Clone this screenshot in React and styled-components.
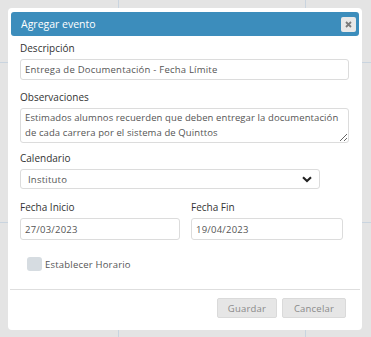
import React from "react";
import styled, { createGlobalStyle } from "styled-components";

const Global = createGlobalStyle`
  html, body { margin: 0; padding: 0; }
  body {
    width: 371px;
    height: 337px;
    overflow: hidden;
    font-family: "Open Sans", "Liberation Sans", sans-serif;
    background-color: #e4e4e4;
    background-image:
      linear-gradient(#c9d4df, #c9d4df),
      linear-gradient(#c9d4df, #c9d4df),
      linear-gradient(#c9d4df, #c9d4df),
      linear-gradient(#c9d4df, #c9d4df);
    background-repeat: no-repeat;
    background-size: 1px 337px, 1px 337px, 371px 1px, 371px 1px;
    background-position: 118px 0, 305px 0, 0 62px, 0 222px;
  }
`;

const Page = styled.div`
  padding: 8px 9px 7px 8px;
`;

const Dialog = styled.div`
  width: 354px;
  height: 322px;
  box-sizing: border-box;
  background: #fff;
  border-radius: 4px;
  padding: 4px 3px 0 3px;
  display: flex;
  flex-direction: column;
`;

const Header = styled.div`
  height: 24px;
  background: #3c8dbc;
  border-radius: 3px;
  display: flex;
  align-items: center;
  justify-content: space-between;
  padding: 0 3px 0 10px;
`;

const Title = styled.span`
  color: #fff;
  font-size: 10.5px;
`;

const CloseButton = styled.button`
  width: 15px;
  height: 15px;
  border: none;
  border-radius: 2px;
  background: #e8e8e8;
  padding: 0;
  display: flex;
  align-items: center;
  justify-content: center;
`;

const Body = styled.div`
  padding: 5px 10px 0 9px;
  display: flex;
  flex-direction: column;
`;

const Label = styled.div`
  font-size: 10px;
  line-height: 14px;
  color: #333;
  margin-top: ${(p) => p.$top || 0}px;
  margin-bottom: 4px;
`;

const Field = styled.div`
  box-sizing: border-box;
  height: ${(p) => p.$h || 21}px;
  width: ${(p) => (p.$w ? `${p.$w}px` : "100%")};
  border: 1px solid #dcdcdc;
  border-radius: 3px;
  padding: 0 ${(p) => p.$pl || 4}px;
  display: flex;
  align-items: center;
  justify-content: space-between;
  font-size: 9.5px;
  letter-spacing: 0.22px;
  color: #555;
`;

const TextArea = styled.textarea`
  box-sizing: border-box;
  height: 35px;
  width: 100%;
  border: 1px solid #dcdcdc;
  border-radius: 3px;
  padding: 1px 2px 1px 4px;
  margin: 0;
  font-family: inherit;
  font-size: 9.5px;
  letter-spacing: 0.1px;
  line-height: 15px;
  color: #555;
  resize: vertical;
  overflow: hidden;
  outline: none;
`;

const Row = styled.div`
  display: flex;
  gap: 11px;
`;

const Col = styled.div`
  display: flex;
  flex-direction: column;
  width: ${(p) => p.$w}px;
`;

const CheckRow = styled.label`
  display: flex;
  align-items: center;
  gap: 3px;
  margin-top: 17px;
  padding-left: 7px;
  height: 14px;
  font-size: 9.5px;
  letter-spacing: 0.2px;
  color: #555;
`;

const CheckBox = styled.span`
  width: 15px;
  height: 14px;
  border-radius: 3px;
  background: #d6dce1;
`;

const Divider = styled.div`
  height: 1px;
  background: #dedede;
  margin: 18px -1px 0 -1px;
`;

const Footer = styled.div`
  display: flex;
  justify-content: flex-end;
  gap: 5px;
  padding: 8px 13px 0 0;
`;

const Button = styled.button`
  width: ${(p) => p.$w}px;
  height: 20px;
  box-sizing: border-box;
  border: 1px solid #dadada;
  border-radius: 2px;
  background: #e6e6e6;
  color: #8a8a8a;
  font-family: inherit;
  font-size: 9.5px;
  letter-spacing: 0.2px;
  padding: 0;
`;

const Chevron = () => (
  <svg width="10" height="7" viewBox="0 0 10 7">
    <path d="M1 1.2 L5 5 L9 1.2" fill="none" stroke="#222" strokeWidth="2.1" />
  </svg>
);

const Times = () => (
  <svg width="7" height="7" viewBox="0 0 7 7">
    <path d="M1 1 L6 6 M6 1 L1 6" stroke="#7a7a7a" strokeWidth="1.8" />
  </svg>
);

export default function App() {
  return (
    <Page>
      <Global />
      <Dialog>
        <Header>
          <Title>Agregar evento</Title>
          <CloseButton aria-label="Cerrar">
            <Times />
          </CloseButton>
        </Header>
        <Body>
          <Label>Descripción</Label>
          <Field>Entrega de Documentación - Fecha Límite</Field>
          <Label $top={10}>Observaciones</Label>
          <TextArea
            readOnly
            defaultValue="Estimados alumnos recuerden que deben entregar la documentación de cada carrera por el sistema de Quinttos"
          />
          <Label $top={8}>Calendario</Label>
          <Field $h={20} $w={300} $pl={7}>
            <span>Instituto</span>
            <Chevron />
          </Field>
          <Row>
            <Col $w={160}>
              <Label $top={11}>Fecha Inicio</Label>
              <Field $h={22}>27/03/2023</Field>
            </Col>
            <Col $w={152}>
              <Label $top={11}>Fecha Fin</Label>
              <Field $h={22}>19/04/2023</Field>
            </Col>
          </Row>
          <CheckRow>
            <CheckBox />
            Establecer Horario
          </CheckRow>
        </Body>
        <Divider />
        <Footer>
          <Button $w={60}>Guardar</Button>
          <Button $w={64}>Cancelar</Button>
        </Footer>
      </Dialog>
    </Page>
  );
}
